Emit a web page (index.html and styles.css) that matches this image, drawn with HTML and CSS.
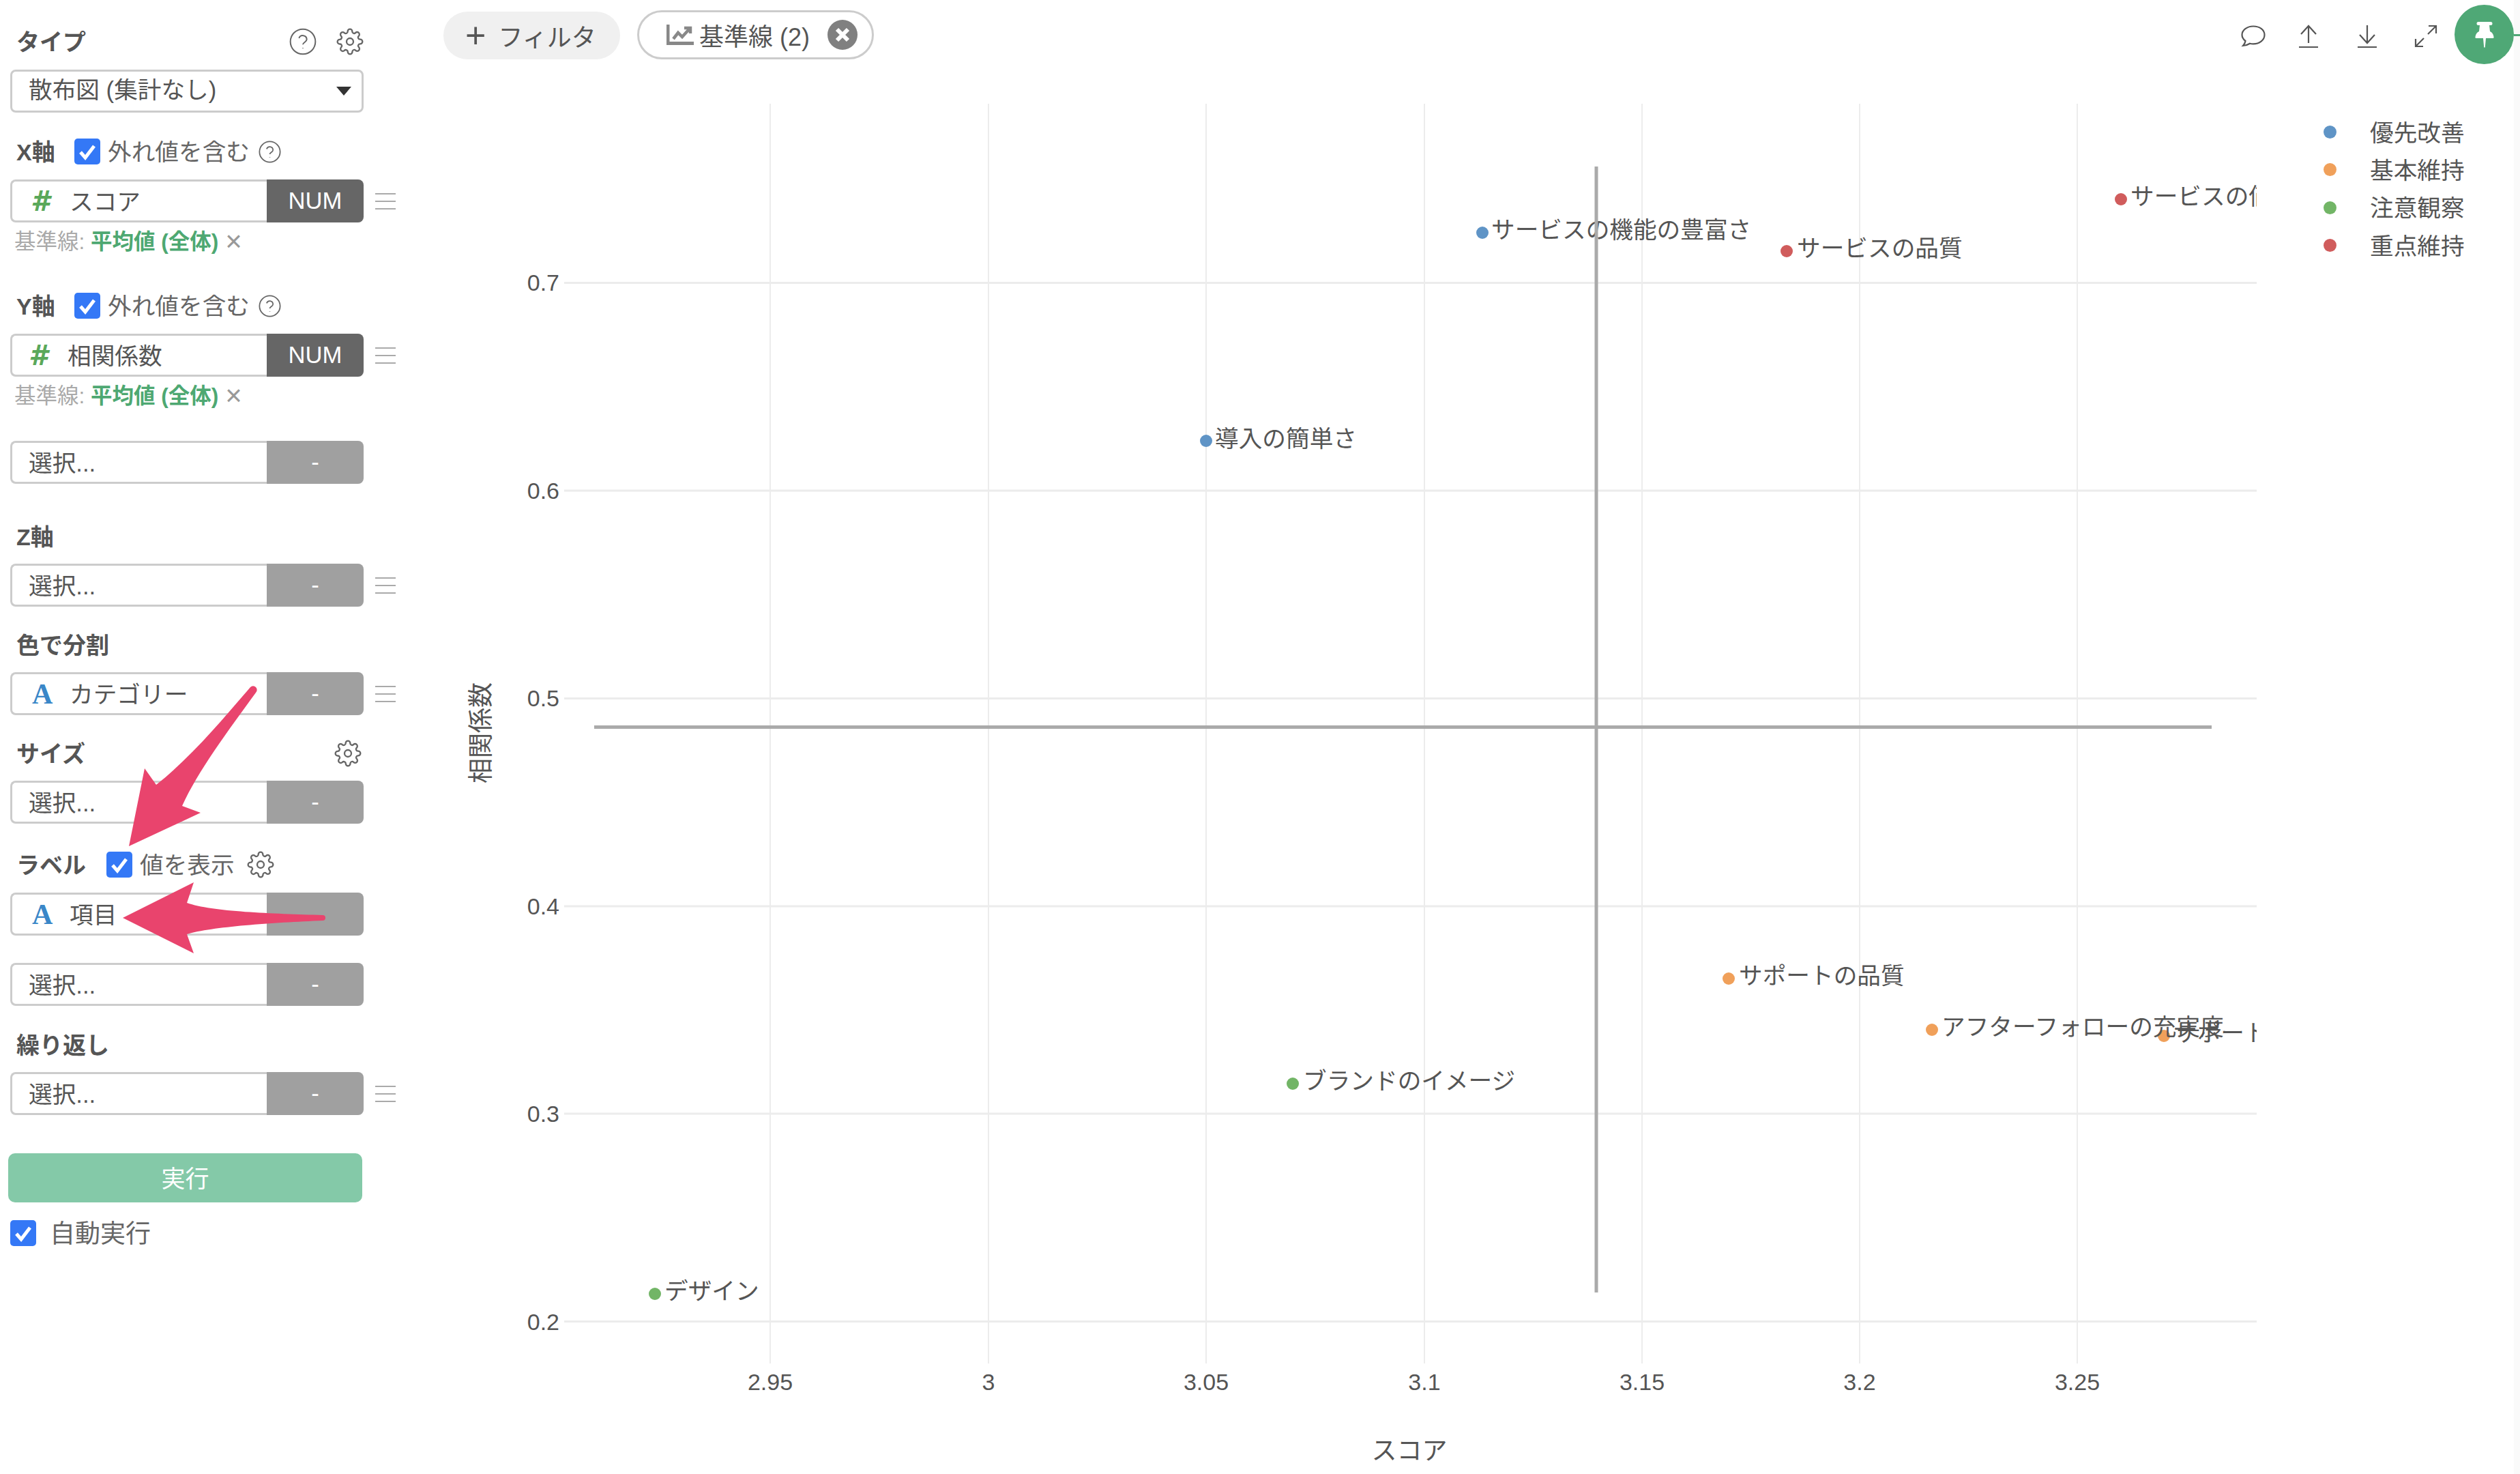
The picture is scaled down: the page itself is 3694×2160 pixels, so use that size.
FILE: index.html
```html
<!DOCTYPE html>
<html lang="ja">
<head>
  <meta charset="UTF-8" />
  <title>散布図</title>
  <link rel="stylesheet" href="styles.css">
</head>
<body>

  <svg class="icon-defs" width="0" height="0">
    <symbol id="i-gear" viewBox="0 0 24 24">
      <circle cx="12" cy="12" r="3"/>
      <path d="M19.4 15a1.65 1.65 0 0 0 .33 1.82l.06.06a2 2 0 0 1 0 2.83 2 2 0 0 1-2.83 0l-.06-.06a1.65 1.65 0 0 0-1.82-.33 1.65 1.65 0 0 0-1 1.51V21a2 2 0 0 1-2 2 2 2 0 0 1-2-2v-.09A1.65 1.65 0 0 0 9 19.4a1.65 1.65 0 0 0-1.82.33l-.06.06a2 2 0 0 1-2.83 0 2 2 0 0 1 0-2.83l.06-.06a1.65 1.65 0 0 0 .33-1.82 1.65 1.65 0 0 0-1.51-1H3a2 2 0 0 1-2-2 2 2 0 0 1 2-2h.09A1.65 1.65 0 0 0 4.6 9a1.65 1.65 0 0 0-.33-1.82l-.06-.06a2 2 0 0 1 0-2.83 2 2 0 0 1 2.83 0l.06.06a1.65 1.65 0 0 0 1.82.33H9a1.65 1.65 0 0 0 1-1.51V3a2 2 0 0 1 2-2 2 2 0 0 1 2 2v.09a1.65 1.65 0 0 0 1 1.51 1.65 1.65 0 0 0 1.82-.33l.06-.06a2 2 0 0 1 2.83 0 2 2 0 0 1 0 2.83l-.06.06a1.65 1.65 0 0 0-.33 1.82V9a1.65 1.65 0 0 0 1.51 1H21a2 2 0 0 1 2 2 2 2 0 0 1-2 2h-.09a1.65 1.65 0 0 0-1.51 1z"/>
    </symbol>
    <symbol id="i-help" viewBox="0 0 24 24">
      <circle cx="12" cy="12" r="11"/>
      <path d="M8.6 9a3.5 3.5 0 0 1 6.8 1.1c0 2.3-3.4 2.6-3.4 4.4"/>
      <path d="M12 17.6v.4"/>
    </symbol>
    <symbol id="i-menu" viewBox="0 0 30 26">
      <path d="M0 2h30M0 13h30M0 24h30"/>
    </symbol>
    <symbol id="i-check" viewBox="0 0 38 38">
      <path d="M9 20l7 8 13-17"/>
    </symbol>
  </svg>

  <aside class="sidebar">
    <section class="section">
      <div class="section-head">
        <span class="section-title">タイプ</span>
        <span class="head-icons">
          <svg class="icon icon-help-lg"><use href="#i-help"/></svg>
          <svg class="icon icon-gear"><use href="#i-gear"/></svg>
        </span>
      </div>
      <div class="select">散布図 (集計なし)<span class="caret"></span></div>
    </section>

    <section class="section sec-x">
      <div class="section-head">
        <span class="section-title axis-title">X軸</span>
        <span class="checkbox"><svg><use href="#i-check"/></svg></span>
        <span class="check-label">外れ値を含む</span>
        <svg class="icon icon-help"><use href="#i-help"/></svg>
      </div>
      <div class="field-row">
        <div class="field">
          <div class="field-main"><span class="type-num">#</span><span class="field-value">スコア</span></div>
          <div class="field-tag tag-dark">NUM</div>
        </div>
        <svg class="icon icon-menu"><use href="#i-menu"/></svg>
      </div>
      <div class="refline">基準線: <b>平均値 (全体)</b><span class="refline-x">×</span></div>
    </section>

    <section class="section sec-y">
      <div class="section-head">
        <span class="section-title axis-title">Y軸</span>
        <span class="checkbox"><svg><use href="#i-check"/></svg></span>
        <span class="check-label">外れ値を含む</span>
        <svg class="icon icon-help"><use href="#i-help"/></svg>
      </div>
      <div class="field-row">
        <div class="field">
          <div class="field-main shift"><span class="type-num">#</span><span class="field-value">相関係数</span></div>
          <div class="field-tag tag-dark">NUM</div>
        </div>
        <svg class="icon icon-menu"><use href="#i-menu"/></svg>
      </div>
      <div class="refline">基準線: <b>平均値 (全体)</b><span class="refline-x">×</span></div>
    </section>

    <section class="section sec-extra">
      <div class="field-row">
        <div class="field">
          <div class="field-main">選択...</div>
          <div class="field-tag">-</div>
        </div>
      </div>
    </section>

    <section class="section sec-z">
      <div class="section-head"><span class="section-title">Z軸</span></div>
      <div class="field-row">
        <div class="field">
          <div class="field-main">選択...</div>
          <div class="field-tag">-</div>
        </div>
        <svg class="icon icon-menu"><use href="#i-menu"/></svg>
      </div>
    </section>

    <section class="section sec-mid">
      <div class="section-head"><span class="section-title">色で分割</span></div>
      <div class="field-row">
        <div class="field">
          <div class="field-main"><span class="type-str">A</span><span class="field-value">カテゴリー</span></div>
          <div class="field-tag">-</div>
        </div>
        <svg class="icon icon-menu"><use href="#i-menu"/></svg>
      </div>
    </section>

    <section class="section sec-mid">
      <div class="section-head">
        <span class="section-title">サイズ</span>
        <span class="head-icons"><svg class="icon icon-gear size-gear"><use href="#i-gear"/></svg></span>
      </div>
      <div class="field-row">
        <div class="field">
          <div class="field-main">選択...</div>
          <div class="field-tag">-</div>
        </div>
      </div>
    </section>

    <section class="section sec-label">
      <div class="section-head">
        <span class="section-title label-title">ラベル</span>
        <span class="checkbox"><svg><use href="#i-check"/></svg></span>
        <span class="check-label">値を表示</span>
        <svg class="icon icon-gear label-gear"><use href="#i-gear"/></svg>
      </div>
      <div class="field-row">
        <div class="field">
          <div class="field-main"><span class="type-str">A</span><span class="field-value">項目</span></div>
          <div class="field-tag"></div>
        </div>
      </div>
      <div class="field-row second">
        <div class="field">
          <div class="field-main">選択...</div>
          <div class="field-tag">-</div>
        </div>
      </div>
    </section>

    <section class="section sec-repeat">
      <div class="section-head"><span class="section-title">繰り返し</span></div>
      <div class="field-row">
        <div class="field">
          <div class="field-main">選択...</div>
          <div class="field-tag">-</div>
        </div>
        <svg class="icon icon-menu"><use href="#i-menu"/></svg>
      </div>
    </section>

    <button class="run-btn">実行</button>
    <div class="auto-run">
      <span class="checkbox"><svg><use href="#i-check"/></svg></span>
      <span>自動実行</span>
    </div>

    <!-- 注釈の矢印 -->
    <svg class="arrows" width="600" height="1500" viewBox="0 0 600 1500">
      <path d="M367 1007C330 1050 280 1110 229 1150L212 1126 189 1240 294 1191 267 1181C290 1130 335 1070 375 1015A5 5 0 0 0 367 1007Z"/>
      <path d="M473 1341C400 1339 310 1336 274 1323L284 1293 180 1345 284 1397 274 1369C310 1358 400 1352 473 1349A4 4 0 0 0 473 1341Z"/>
    </svg>
  </aside>

  <main class="main">
    <div class="toolbar">
      <div class="pills">
        <div class="pill pill-add"><span class="plus">+</span>フィルタ</div>
        <div class="pill pill-ref">
          <svg class="chart-icon" viewBox="0 0 40 30">
            <path class="chart-axis" d="M2 0V27.500H40"/>
            <path class="chart-zig" d="M10 21l7-9 6 6 10-11M26 5h9v8"/>
          </svg>
          <span>基準線 <span class="count">(2)</span></span>
          <svg class="close-icon" viewBox="0 0 44 44">
            <circle cx="22" cy="22" r="22"/>
            <path d="M14 14l16 16M30 14L14 30"/>
          </svg>
        </div>
      </div>
      <div class="actions">
        <svg class="action act-comment" width="36" height="32" viewBox="0 0 36 32"><path d="M18 1.500C9 1.500 1.500 7 1.500 14c0 3.800 2 6.800 5 9-.3 2.500-1.500 4.800-3.500 7 3.800-.2 7.200-1.400 10-3.200 1.600.4 3.200.6 5 .6 9 0 16.500-5.600 16.500-13.400S27 1.500 18 1.500z"/></svg>
        <svg class="action act-up" width="28" height="34" viewBox="0 0 28 34"><path d="M14 2v25M3 14L14 2l11 12M0 33h28"/></svg>
        <svg class="action act-down" width="28" height="34" viewBox="0 0 28 34"><path d="M14 1v26M3 15l11 12 11-12M0 33h28"/></svg>
        <svg class="action act-expand" width="34" height="34" viewBox="0 0 34 34"><path d="M2 32l12-12M20 14L32 2M21 2h11v11M2 21v11h11"/></svg>
        <div class="pin-btn">
          <svg width="28" height="38" viewBox="0 0 28 38"><path d="M5 0h18a1.500 1.500 0 0 1 0 5h-2l1 9c3 1.500 5 4 5.500 8a1.500 1.500 0 0 1-1.500 2H16l-1.200 13c-.1 1-1.500 1-1.600 0L12 24H2a1.500 1.500 0 0 1-1.500-2C1 18 3 15.500 6 14l1-9H5a1.500 1.500 0 0 1 0-5z"/></svg>
        </div>
      </div>
    </div>

    <div class="chart-area">
      <!-- viewBox はページ座標に合わせてある -->
      <svg class="chart" width="2720" height="2050" viewBox="600 110 2720 2050">
        <defs>
          <clipPath id="plot-clip"><rect x="600" y="110" width="2708" height="2050"/></clipPath>
        </defs>

        <g class="grid-x">
          <path d="M1129 152V1998M1449 152V1998M1768 152V1998M2088 152V1998M2407 152V1998M2726 152V1998M3045 152V1998"/>
        </g>
        <g class="grid-y">
          <path d="M827 414.500H3308M827 719H3308M827 1023.500H3308M827 1328H3308M827 1632H3308M827 1936.500H3308"/>
        </g>

        <g class="tick tick-y">
          <text x="820" y="414">0.7</text>
          <text x="820" y="719">0.6</text>
          <text x="820" y="1023">0.5</text>
          <text x="820" y="1328">0.4</text>
          <text x="820" y="1632">0.3</text>
          <text x="820" y="1937">0.2</text>
        </g>
        <g class="tick tick-x">
          <text x="1129" y="2025">2.95</text>
          <text x="1449" y="2025">3</text>
          <text x="1768" y="2025">3.05</text>
          <text x="2088" y="2025">3.1</text>
          <text x="2407" y="2025">3.15</text>
          <text x="2726" y="2025">3.2</text>
          <text x="3045" y="2025">3.25</text>
        </g>

        <text class="axis-name" x="2066" y="2126">スコア</text>
        <text class="axis-name" transform="translate(705 1074) rotate(-90)">相関係数</text>

        <g class="dots">
          <circle class="c-blue" cx="2173" cy="341" r="9"/>
          <circle class="c-blue" cx="1768" cy="646" r="9"/>
          <circle class="c-red" cx="2619" cy="368" r="9"/>
          <circle class="c-red" cx="3109" cy="292" r="9"/>
          <circle class="c-orange" cx="2534" cy="1434" r="9"/>
          <circle class="c-orange" cx="2832" cy="1509" r="9"/>
          <circle class="c-orange" cx="3172" cy="1518" r="9"/>
          <circle class="c-green" cx="1895" cy="1588" r="9"/>
          <circle class="c-green" cx="960" cy="1896" r="9"/>
        </g>

        <g class="point-labels" clip-path="url(#plot-clip)">
          <text x="2186" y="337">サービスの機能の豊富さ</text>
          <text x="1781" y="643">導入の簡単さ</text>
          <text x="2634" y="364">サービスの品質</text>
          <text x="3123" y="288">サービスの価格</text>
          <text x="2549" y="1430">サポートの品質</text>
          <text x="2846" y="1505">アフターフォローの充実度</text>
          <text x="3186" y="1514">サポートの対応</text>
          <text x="1910" y="1584">ブランドのイメージ</text>
          <text x="974" y="1892">デザイン</text>
        </g>

        <g class="ref-lines">
          <path d="M2340 244V1894M871 1065.500H3242"/>
        </g>
      </svg>

      <ul class="legend">
        <li><span class="legend-dot c-blue"></span>優先改善</li>
        <li><span class="legend-dot c-orange"></span>基本維持</li>
        <li><span class="legend-dot c-green"></span>注意観察</li>
        <li><span class="legend-dot c-red"></span>重点維持</li>
      </ul>
    </div>
  </main>

  <div class="scroll-strip"></div>

</body>
</html>
```

FILE: styles.css
```css
* {
  box-sizing: border-box;
  margin: 0;
  padding: 0;
}

html, body {
  height: 2160px;
  overflow: hidden;
}

body {
  display: flex;
  background: #fff;
  color: #555;
  font-family: "Liberation Sans", "Noto Sans CJK JP", sans-serif;
  font-size: 34.670px;
}

.icon-defs {
  position: absolute;
}

/* sidebar */
.sidebar {
  position: relative;
  flex: none;
  width: 600px;
  padding: 41px 0 0 15px;
}

.section-head {
  display: flex;
  align-items: center;
  width: 518px;
  height: 40px;
  margin-bottom: 21px;
}

.section-title {
  flex: none;
  padding: 0 0 3px 9px;
  font-size: 34px;
  font-weight: 700;
  color: #555;
}

.axis-title {
  width: 94px;
}

.label-title {
  width: 141px;
}

.head-icons {
  display: flex;
  align-items: center;
  margin-left: auto;
}

.icon {
  flex: none;
  fill: none;
  stroke: #666;
  stroke-width: 1.5;
}

.icon-gear {
  width: 40px;
  height: 40px;
  stroke-width: 1.4;
}

.icon-help-lg {
  width: 40px;
  height: 40px;
  margin-right: 29px;
  stroke-width: 1.2;
}

.icon-help {
  width: 33px;
  height: 33px;
  margin-left: 13px;
  stroke-width: 1.3;
}

.size-gear {
  margin-right: 3px;
}

.label-gear {
  margin-left: 18px;
}

.icon-menu {
  width: 30px;
  height: 26px;
  margin-left: 17px;
  stroke: #aaa;
  stroke-width: 2;
}

.sec-x { margin-top: 37px; }
.sec-y { margin-top: 54px; }
.sec-extra { margin-top: 46px; }
.sec-z { margin-top: 57px; }
.sec-mid { margin-top: 36px; }
.sec-label { margin-top: 40px; }
.sec-repeat { margin-top: 37px; }

.sec-z .section-head,
.sec-mid .section-head,
.sec-repeat .section-head {
  margin-bottom: 20px;
}

.select {
  position: relative;
  width: 518px;
  height: 63px;
  padding-left: 24px;
  border: 3px solid #ccc;
  border-radius: 8px;
  line-height: 54px;
  color: #555;
}

.caret {
  position: absolute;
  top: 22px;
  right: 15px;
  border-top: 13px solid #333;
  border-left: 11px solid transparent;
  border-right: 11px solid transparent;
}

.checkbox {
  flex: none;
  display: block;
  width: 38px;
  height: 38px;
  border-radius: 5px;
  background: #3478f6;
}

.checkbox svg {
  display: block;
  width: 38px;
  height: 38px;
  fill: none;
  stroke: #fff;
  stroke-width: 5;
}

.check-label {
  margin-left: 11px;
  padding-bottom: 4px;
  color: #666;
}

.field-row {
  display: flex;
  align-items: center;
}

.field-row.second {
  margin-top: 40px;
}

.field {
  display: flex;
  flex: none;
  width: 518px;
  height: 63px;
}

.field-main {
  display: flex;
  align-items: center;
  flex: 1;
  padding: 0 0 3px 24px;
  border: 3px solid #ccc;
  border-right: none;
  border-radius: 8px 0 0 8px;
  color: #555;
}

.field-tag {
  flex: none;
  width: 142px;
  border-radius: 0 8px 8px 0;
  background: #a0a0a0;
  color: #fff;
  text-align: center;
  line-height: 63px;
}

.tag-dark {
  background: #666;
}

.type-num,
.type-str {
  flex: none;
  width: 60px;
  padding: 3px 0 0 3px;
  font-weight: 700;
}

.type-num {
  font-family: "DejaVu Sans", sans-serif;
  font-size: 40px;
  font-style: italic;
  color: #5aa85a;
}

.type-str {
  padding-left: 5px;
  font-family: "Liberation Serif", serif;
  font-size: 42px;
  color: #3a87c8;
}

.shift {
  padding-left: 21px;
}

.refline {
  height: 40px;
  margin-top: 8px;
  padding-left: 6px;
  font-size: 31.500px;
  line-height: 40px;
  color: #aaa;
}

.refline b {
  color: #4ea872;
}

.refline-x {
  margin-left: 10px;
  font-size: 42px;
  line-height: 40px;
  vertical-align: -3px;
  color: #999;
}

.run-btn {
  display: block;
  width: 519px;
  height: 72px;
  margin: 56px 0 0 -3px;
  padding-bottom: 3px;
  border: none;
  border-radius: 10px;
  background: #84c9a8;
  color: #fff;
  font-family: inherit;
  font-size: 35px;
}

.auto-run {
  display: flex;
  align-items: center;
  gap: 20px;
  height: 38px;
  margin-top: 26px;
  font-size: 37px;
  color: #666;
}

.auto-run span:last-child {
  padding-bottom: 4px;
}

.arrows {
  position: absolute;
  top: 0;
  left: 0;
  fill: #e9446d;
  pointer-events: none;
}

/* main */
.main {
  flex: 1;
  min-width: 0;
}

.toolbar {
  display: flex;
  justify-content: space-between;
  height: 110px;
  padding-left: 50px;
}

.pills {
  display: flex;
  align-items: center;
  gap: 25px;
  height: 72px;
  margin-top: 15px;
}

.pill {
  display: flex;
  align-items: center;
  border-radius: 36px;
  font-size: 36px;
  color: #555;
}

.pill-add {
  width: 259px;
  height: 70px;
  margin-top: 2px;
  padding-left: 32px;
  background: #f0f0f0;
}

.plus {
  margin-right: 18px;
  font-size: 52px;
  line-height: 1;
}

.pill-ref {
  width: 347px;
  height: 72px;
  padding-left: 40px;
  border: 3px solid #ccc;
}

.chart-icon {
  width: 40px;
  height: 30px;
  margin-right: 8px;
  fill: none;
}

.chart-axis {
  stroke: #888;
  stroke-width: 5;
}

.chart-zig {
  stroke: #888;
  stroke-width: 4.5;
}

.count {
  font-size: 36px;
}

.close-icon {
  width: 44px;
  height: 44px;
  margin-left: 26px;
}

.close-icon circle {
  fill: #808080;
}

.close-icon path {
  fill: none;
  stroke: #fff;
  stroke-width: 6;
}

.actions {
  display: flex;
  align-items: center;
  height: 87px;
  margin-top: 7px;
}

.action {
  flex: none;
  margin-top: 4px;
  fill: none;
  stroke: #555;
  stroke-width: 2.2;
}

.act-comment { margin-right: 49px; }
.act-up { margin-right: 58px; }
.act-down { margin-right: 55px; }
.act-expand { margin-right: 25px; }

.pin-btn {
  position: relative;
  display: flex;
  align-items: center;
  justify-content: center;
  width: 87px;
  height: 87px;
  border-radius: 50%;
  background: #4fa876;
  fill: #fff;
}

/* ピンの右に出る短い線 */
.pin-btn::after {
  content: "";
  position: absolute;
  top: 43px;
  left: 87px;
  width: 9px;
  height: 3px;
  background: #4fa876;
}

.chart-area {
  display: flex;
}

.chart {
  display: block;
  flex: none;
}

.grid-x path {
  fill: none;
  stroke: #ececec;
  stroke-width: 2;
}

.grid-y path {
  fill: none;
  stroke: #ececec;
  stroke-width: 3;
}

.ref-lines path {
  fill: none;
  stroke: #aaa;
  stroke-width: 5;
}

.tick text {
  font-size: 34px;
  fill: #555;
  dominant-baseline: central;
}

.tick-y text {
  text-anchor: end;
}

.tick-x text {
  text-anchor: middle;
}

.axis-name {
  font-size: 37px;
  fill: #555;
  text-anchor: middle;
  dominant-baseline: central;
}

.point-labels text {
  font-size: 34.670px;
  fill: #555;
  dominant-baseline: central;
}

.dots .c-blue { fill: #5f94c6; }
.dots .c-orange { fill: #f0a05a; }
.dots .c-green { fill: #72b566; }
.dots .c-red { fill: #d05c5c; }

.legend {
  flex: none;
  padding: 56px 0 0 86px;
  list-style: none;
  color: #555;
}

.legend li {
  display: flex;
  align-items: center;
  height: 55.330px;
  padding-bottom: 4px;
}

.legend-dot {
  width: 19px;
  height: 19px;
  margin: 4px 49px 0 0;
  border-radius: 50%;
}

.legend-dot.c-blue { background: #5f94c6; }
.legend-dot.c-orange { background: #f0a05a; }
.legend-dot.c-green { background: #72b566; }
.legend-dot.c-red { background: #d05c5c; }

.scroll-strip {
  flex: none;
  width: 9px;
  background: #fafafa;
}
```
